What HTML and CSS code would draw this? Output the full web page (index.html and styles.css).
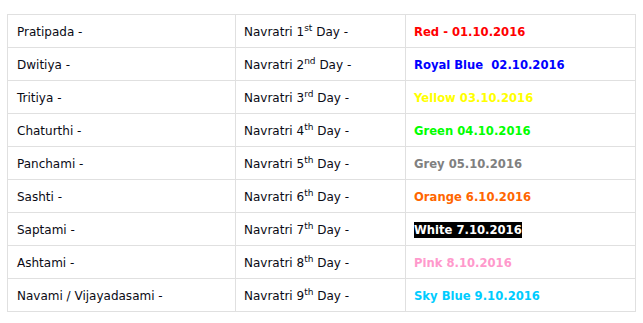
FILE: index.html
```html
<!DOCTYPE html>
<html>
<head>
<meta charset="utf-8">
<link rel="stylesheet" href="styles.css">
</head>
<body>
<table class="navratri">
  <colgroup><col class="c1"><col class="c2"><col class="c3"></colgroup>
  <tr><td>Pratipada -</td><td>Navratri 1<sup>st</sup> Day -</td><td><span class="clr red">Red - 01.10.2016</span></td></tr>
  <tr><td>Dwitiya -</td><td>Navratri 2<sup>nd</sup> Day -</td><td><span class="clr blue">Royal Blue&nbsp; 02.10.2016</span></td></tr>
  <tr><td>Tritiya -</td><td>Navratri 3<sup>rd</sup> Day -</td><td><span class="clr yellow">Yellow 03.10.2016</span></td></tr>
  <tr><td>Chaturthi -</td><td>Navratri 4<sup>th</sup> Day -</td><td><span class="clr green">Green 04.10.2016</span></td></tr>
  <tr><td>Panchami -</td><td>Navratri 5<sup>th</sup> Day -</td><td><span class="clr grey">Grey 05.10.2016</span></td></tr>
  <tr><td>Sashti -</td><td>Navratri 6<sup>th</sup> Day -</td><td><span class="clr orange">Orange 6.10.2016</span></td></tr>
  <tr><td>Saptami -</td><td>Navratri 7<sup>th</sup> Day -</td><td><span class="clr white">White 7.10.2016</span></td></tr>
  <tr><td>Ashtami -</td><td>Navratri 8<sup>th</sup> Day -</td><td><span class="clr pink">Pink 8.10.2016</span></td></tr>
  <tr><td>Navami / Vijayadasami -</td><td>Navratri 9<sup>th</sup> Day -</td><td><span class="clr sky">Sky Blue 9.10.2016</span></td></tr>
</table>
</body>
</html>
```
FILE: styles.css
```css
body {
  margin: 0;
  padding: 14px 0 0 7px;
  background: #fff;
  font-family: "DejaVu Sans", Verdana, sans-serif;
  font-size: 12px;
  color: #0a0a14;
}
.navratri {
  border-collapse: collapse;
  width: 628px;
  table-layout: fixed;
}
.c1 { width: 228px; }
.c2 { width: 170px; }
.c3 { width: 230px; }
.navratri td {
  border: 1px solid #e0e0e0;
  height: 33px;
  padding: 2px 8px 0;
  box-sizing: border-box;
  vertical-align: middle;
  line-height: 16px;
}
.navratri td:first-child { padding-left: 9px; }
.navratri td:nth-child(2) { padding-left: 8px; }
sup {
  font-size: 9px;
  line-height: 0;
  vertical-align: 5px;
}
.clr { font-weight: bold; font-size: 11.6px; }
.red { color: #ff0000; }
.blue { color: #0000ff; }
.yellow { color: #ffff00; }
.green { color: #00ff00; }
.grey { color: #808080; }
.orange { color: #ff6600; }
.white { color: #fff; background: #000; padding: 1px 0; }
.pink { color: #ff99cc; }
.sky { color: #00ccff; }
```
